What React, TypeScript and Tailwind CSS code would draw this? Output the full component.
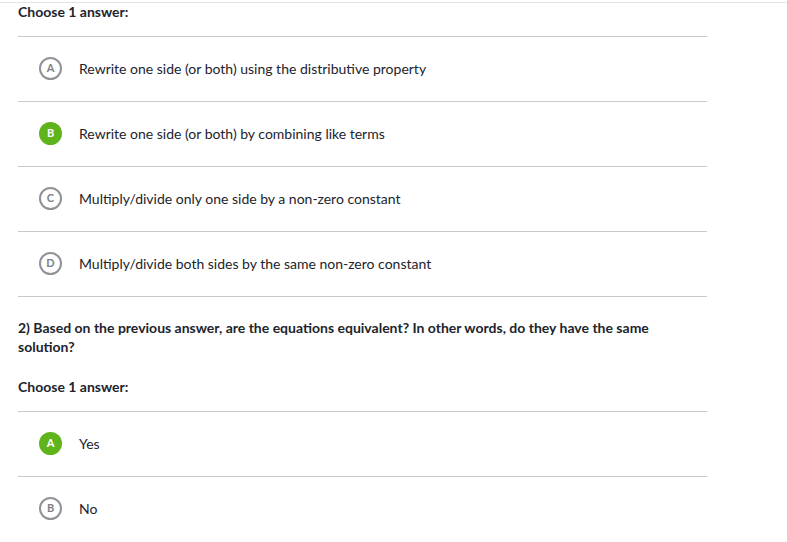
const font = { fontFamily: "Lato, 'Noto Sans', sans-serif" };

type Choice = { letter: string; text: string; selected?: boolean };

const first: Choice[] = [
  { letter: "A", text: "Rewrite one side (or both) using the distributive property" },
  { letter: "B", text: "Rewrite one side (or both) by combining like terms", selected: true },
  { letter: "C", text: "Multiply/divide only one side by a non-zero constant" },
  { letter: "D", text: "Multiply/divide both sides by the same non-zero constant" },
];

function Bubble({ letter, selected }: { letter: string; selected?: boolean }) {
  if (selected) {
    return (
      <div className="flex h-[23px] w-[23px] shrink-0 items-center justify-center rounded-full bg-[#5fb41b] text-[11px] font-bold text-white">
        {letter}
      </div>
    );
  }
  return (
    <div className="flex h-[23px] w-[23px] shrink-0 items-center justify-center rounded-full border-2 border-[#8f9296] text-[11px] font-bold text-[#7d8084]">
      {letter}
    </div>
  );
}

function Row({ c, last }: { c: Choice; last?: boolean }) {
  return (
    <div
      className={`flex h-[65px] items-center gap-[17px] pb-[2px] pl-[21px] ${last ? "" : "border-b border-[#c9cacc]"}`}
    >
      <Bubble letter={c.letter} selected={c.selected} />
      <span className="text-[14px] text-[#21242c]">{c.text}</span>
    </div>
  );
}

export default function App() {
  return (
    <div className="flex h-[542px] w-[787px] flex-col bg-white" style={font}>
      <div className="mt-[2px] border-t border-[#e3e3e3]" />
      <div className="flex-1">
        <p className="mb-[15px] pl-[18px] text-[14px] font-bold leading-[18px] text-[#21242c]">Choose 1 answer:</p>
        <div className="ml-[18px] w-[689px] border-t border-[#c9cacc]">
          {first.map((c) => (
            <Row key={c.letter} c={c} />
          ))}
        </div>
        <p className="mt-[21px] w-[680px] pl-[18px] text-[14px] font-bold leading-[19px] text-[#21242c]">
          2) Based on the previous answer, are the equations equivalent? In other words, do they have the same solution?
        </p>
        <p className="mb-[15px] mt-[22px] pl-[18px] text-[14px] font-bold leading-[18px] text-[#21242c]">Choose 1 answer:</p>
        <div className="ml-[18px] w-[689px] border-t border-[#c9cacc]">
          <Row c={{ letter: "A", text: "Yes", selected: true }} />
          <Row c={{ letter: "B", text: "No" }} last />
        </div>
      </div>
      <div className="h-[3px] bg-[#f4f4f4]" />
    </div>
  );
}
